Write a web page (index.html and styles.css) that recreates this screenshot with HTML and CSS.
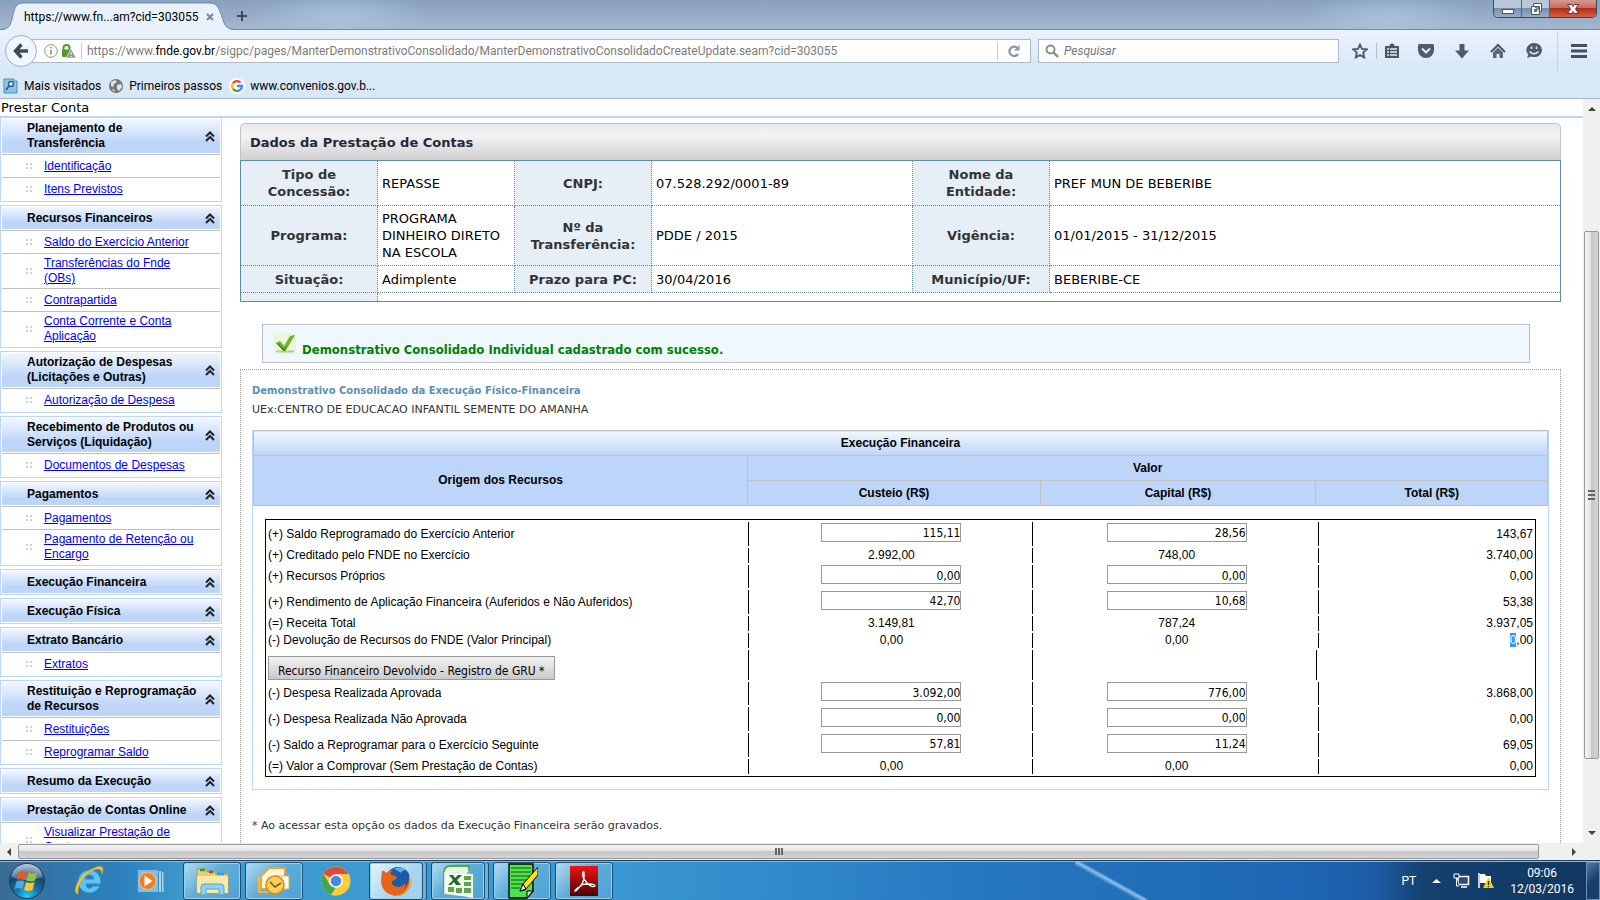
FILE: index.html
```html
<!DOCTYPE html>
<html lang="pt-BR">
<head>
<meta charset="utf-8">
<title>Prestar Conta</title>
<link rel="stylesheet" href="styles.css">
</head>
<body>
<header class="browser">
  <div class="tabstrip">
    <div class="tab">
      <svg class="tab-shape" viewBox="0 0 240 28" preserveAspectRatio="none" aria-hidden="true"><path d="M0 28 C12 28 11 20 14 10 C16 3 18 1 25 1 L211 1 C219 1 221 3 224 10 C228 20 227 28 240 28 Z" fill="#e9f2fb"/><path d="M0 27.500 C12 27.500 11 20 14 10 C16 3 18 1 25 1 L211 1 C219 1 221 3 224 10 C228 20 227 27.500 240 27.500" fill="none" stroke="#7089a6"/></svg>
      <span class="tab-title">https://www.fn...am?cid=303055</span>
      <button class="tab-close" aria-label="Fechar aba"><svg width="8" height="8" viewBox="0 0 8 8"><path d="M1 1l6 6M7 1l-6 6" stroke="#7d8b9a" stroke-width="2.200"/></svg></button>
    </div>
    <button class="tab-new" aria-label="Nova aba"><svg width="12" height="12" viewBox="0 0 12 12"><path d="M6 1v10M1 6h10" stroke="#3c4c5c" stroke-width="2"/></svg></button>
    <div class="window-buttons">
      <button aria-label="Minimizar"><svg width="14" height="14" viewBox="0 0 14 14"><rect x="1.500" y="7.500" width="11" height="4" fill="#fff" stroke="#47566a"/></svg></button>
      <button aria-label="Restaurar"><svg width="14" height="14" viewBox="0 0 14 14"><path d="M4.500 1.500h8v8h-2v3h-8v-8h2z" fill="#fff" stroke="#47566a"/><path d="M4.500 4.500h6v5M5.500 7.500h2v2h-2z" fill="#7189a5" stroke="#47566a"/></svg></button>
      <button class="close" aria-label="Fechar"><svg width="14" height="14" viewBox="0 0 14 14"><path d="M1.500 2.500h4L7 4.500l1.500-2h4L9.500 7l3 4.500h-4L7 9.500l-1.500 2h-4l3-4.500z" fill="#fff" stroke="#5b3740"/></svg></button>
    </div>
  </div>
  <nav class="navbar" aria-label="Navegação">
    <button class="back" aria-label="Voltar"><svg width="16" height="16" viewBox="0 0 16 16"><path d="M8.500 1.500L2.500 8l6 6.500M3 8h12" fill="none" stroke="#3e4b59" stroke-width="3.400"/></svg></button>
    <div class="urlbar">
      <svg width="14" height="14" viewBox="0 0 14 14"><circle cx="7" cy="7" r="6.300" fill="none" stroke="#909090"/><path d="M7 6v4.500M7 3v1.600" stroke="#8a8a8a" stroke-width="1.600"/></svg>
      <svg width="15" height="15" viewBox="0 0 15 15"><path d="M2.500 6V4a3 3 0 016 0v2" fill="none" stroke="#4c9b27" stroke-width="2"/><rect x="1" y="5.500" width="8" height="7.500" rx="1" fill="#4c9b27"/><path d="M10 4.500L15 14H5z" fill="#8f9494" stroke="#fff" stroke-width=".6"/><path d="M10 8v3M10 12v1" stroke="#fff"/></svg>
      <div class="url" role="textbox" aria-label="Endereço">https://www.<b>fnde.gov.br</b>/sigpc/pages/ManterDemonstrativoConsolidado/ManterDemonstrativoConsolidadoCreateUpdate.seam?cid=303055</div>
      <button class="reload" aria-label="Recarregar"><svg width="14" height="14" viewBox="0 0 14 14"><path d="M11 10A4.700 4.700 0 1110 3.600" fill="none" stroke="#8797a8" stroke-width="2.200"/><path d="M12.500 1v5.500H7z" fill="#8797a8"/></svg></button>
    </div>
    <label class="search"><svg width="14" height="14" viewBox="0 0 14 14"><circle cx="5.500" cy="5.500" r="4" fill="none" stroke="#8d8d8d" stroke-width="2"/><path d="M8.500 8.500l4.500 4.500" stroke="#8d8d8d" stroke-width="2.400"/></svg><input type="text" placeholder="Pesquisar" aria-label="Pesquisar"></label>
    <div class="tools">
      <button aria-label="Favoritar"><svg viewBox="0 0 16 16"><path d="M8 1.500l2 4.400 4.800.5-3.600 3.200 1 4.800L8 12l-4.200 2.400 1-4.800L1.200 6.400 6 5.900z" fill="none" stroke="#4a5763" stroke-width="1.800"/></svg></button>
      <button class="divided" aria-label="Favoritos"><svg viewBox="0 0 16 16"><path d="M1 3h4.500a2.500 2.500 0 015 0H15v12H1z" fill="#4a5763"/><path d="M3 6h2M6 6h7M3 9h2M6 9h7M3 12h2M6 12h7" stroke="#e4eef8" stroke-width="1.400"/></svg></button>
      <button aria-label="Pocket"><svg viewBox="0 0 16 16"><path d="M0 2.500Q0 1 1.500 1h13Q16 1 16 2.500V7a8 8 0 01-16 0z" fill="#4f5b68"/><path d="M4 5.500l4 4 4-4" fill="none" stroke="#e4eef8" stroke-width="2"/></svg></button>
      <button aria-label="Downloads"><svg viewBox="0 0 16 16"><path d="M5.500 1h5v6.500H15l-7 8-7-8h4.500z" fill="#4f5b68"/></svg></button>
      <button aria-label="Início"><svg viewBox="0 0 16 16"><path d="M1 9l7-7 7 7" fill="none" stroke="#4a5763" stroke-width="2"/><path d="M3 9.500l5-5 5 5V15H9.500v-4h-3v4H3z" fill="#5c6874"/></svg></button>
      <button aria-label="Hello"><svg viewBox="0 0 16 16"><path d="M8 0a8 7 0 018 7 8 7 0 01-11 6.600L1 15l1.300-3.500A8 7 0 018 0z" fill="#4f5b68"/><path d="M5.500 3.500v2.500M10.500 3.500v2.500M3.500 8.500q4.500 4.500 9 0" fill="none" stroke="#e4eef8" stroke-width="1.500"/></svg></button>
      <button class="menu" aria-label="Menu"><svg viewBox="0 0 16 16"><path d="M0 2.500h16M0 8h16M0 13.500h16" stroke="#44505c" stroke-width="2.800"/></svg></button>
    </div>
  </nav>
  <nav class="bookmarks" aria-label="Favoritos">
    <a href="#"><svg width="16" height="16" viewBox="0 0 16 16"><path d="M1 1h10v2h3v12H1z" fill="#8ec4e6" stroke="#4a8fbd"/><circle cx="8" cy="6" r="2.500" fill="#d8effc" stroke="#28638c" stroke-width="1.400"/><path d="M6 8l-3 4" stroke="#28638c" stroke-width="1.800"/></svg>Mais visitados</a>
    <a href="#"><svg width="16" height="16" viewBox="0 0 16 16"><circle cx="8" cy="8" r="7" fill="#777"/><path d="M3 4l4-2 2 2-3 2-1 3-2-1zM9 7l4-1 1 3-3 4-2-2zM4 11l3 1-1 2z" fill="#e2e6ea"/></svg>Primeiros passos</a>
    <a href="#"><svg width="16" height="16" viewBox="0 0 16 16"><circle cx="8" cy="8" r="8" fill="#fff"/><g fill="none" stroke-width="2.300"><path d="M4 5.200A5 5 0 0111.500 4.500" stroke="#ea4335"/><path d="M4 5.200a5 5 0 000 5.600" stroke="#fbbc05"/><path d="M4 10.800A5 5 0 0011 12" stroke="#34a853"/><path d="M11 12A5 5 0 0013 8H8" stroke="#4285f4"/></g></svg>www.convenios.gov.b...</a>
  </nav>
</header>

<div class="viewport">
  <div class="page">
    <div class="crumb">Prestar Conta</div>
    <div class="columns">
      <nav class="sidebar" aria-label="Menu principal">
        <section><h2>Planejamento de Transferência</h2><ul><li><a href="#">Identificação</a></li><li><a href="#">Itens Previstos</a></li></ul></section>
        <section><h2>Recursos Financeiros</h2><ul><li><a href="#">Saldo do Exercício Anterior</a></li><li><a href="#">Transferências do Fnde (OBs)</a></li><li><a href="#">Contrapartida</a></li><li><a href="#">Conta Corrente e Conta Aplicação</a></li></ul></section>
        <section><h2>Autorização de Despesas (Licitações e Outras)</h2><ul><li><a href="#">Autorização de Despesa</a></li></ul></section>
        <section><h2>Recebimento de Produtos ou Serviços (Liquidação)</h2><ul><li><a href="#">Documentos de Despesas</a></li></ul></section>
        <section><h2>Pagamentos</h2><ul><li><a href="#">Pagamentos</a></li><li><a href="#">Pagamento de Retenção ou Encargo</a></li></ul></section>
        <section><h2>Execução Financeira</h2></section>
        <section><h2>Execução Física</h2></section>
        <section><h2>Extrato Bancário</h2><ul><li><a href="#">Extratos</a></li></ul></section>
        <section><h2>Restituição e Reprogramação de Recursos</h2><ul><li><a href="#">Restituições</a></li><li><a href="#">Reprogramar Saldo</a></li></ul></section>
        <section><h2>Resumo da Execução</h2></section>
        <section><h2>Prestação de Contas Online</h2><ul><li><a href="#">Visualizar Prestação de Contas</a></li></ul></section>
      </nav>
      <main class="content">
        <h1 class="panel-title">Dados da Prestação de Contas</h1>
        <table class="info">
          <colgroup><col class="k"><col class="k"><col class="k"><col class="v"><col class="k"><col></colgroup>
          <tr><th>Tipo de Concessão:</th><td>REPASSE</td><th>CNPJ:</th><td>07.528.292/0001-89</td><th>Nome da Entidade:</th><td>PREF MUN DE BEBERIBE</td></tr>
          <tr><th>Programa:</th><td>PROGRAMA DINHEIRO DIRETO NA ESCOLA</td><th>Nº da Transferência:</th><td>PDDE / 2015</td><th>Vigência:</th><td>01/01/2015 - 31/12/2015</td></tr>
          <tr><th>Situação:</th><td>Adimplente</td><th>Prazo para PC:</th><td>30/04/2016</td><th>Município/UF:</th><td>BEBERIBE-CE</td></tr>
          <tr class="blank"><th></th><td colspan="5"></td></tr>
        </table>
        <p class="message"><svg width="22" height="22" viewBox="0 0 22 22" aria-hidden="true"><rect width="22" height="22" fill="#edf6dc"/><path d="M2 18.500h18" stroke="#b9c3b0" stroke-width="2"/><path d="M2 10l4-2 4 5L16 3l5-1-9.500 16H9.500z" fill="#6cb52d"/><path d="M9.500 18L2 10l3 1 5 5 2-3-1 5z" fill="#3f8a1c"/></svg><strong>Demonstrativo Consolidado Individual cadastrado com sucesso.</strong></p>
        <div class="box">
          <h2>Demonstrativo Consolidado da Execução Físico-Financeira</h2>
          <p class="unit">UEx:CENTRO DE EDUCACAO INFANTIL SEMENTE DO AMANHA</p>
          <div class="grid">
            <table class="head">
              <colgroup><col class="h1"><col class="h2"><col class="h3"><col></colgroup>
              <tr><th class="caption" colspan="4">Execução Financeira</th></tr>
              <tr><th rowspan="2">Origem dos Recursos</th><th colspan="3">Valor</th></tr>
              <tr><th>Custeio (R$)</th><th>Capital (R$)</th><th>Total (R$)</th></tr>
            </table>
            <table class="data">
              <colgroup><col class="d1"><col class="d2"><col class="d3"><col></colgroup>
              <tr class="tall"><td>(+) Saldo Reprogramado do Exercício Anterior</td><td><input value="115,11" aria-label="Saldo anterior, custeio"></td><td><input value="28,56" aria-label="Saldo anterior, capital"></td><td>143,67</td></tr>
              <tr><td>(+) Creditado pelo FNDE no Exercício</td><td>2.992,00</td><td>748,00</td><td>3.740,00</td></tr>
              <tr class="mid"><td>(+) Recursos Próprios</td><td><input value="0,00" aria-label="Recursos próprios, custeio"></td><td><input value="0,00" aria-label="Recursos próprios, capital"></td><td>0,00</td></tr>
              <tr class="tall"><td>(+) Rendimento de Aplicação Financeira (Auferidos e Não Auferidos)</td><td><input value="42,70" aria-label="Rendimento, custeio"></td><td><input value="10,68" aria-label="Rendimento, capital"></td><td>53,38</td></tr>
              <tr><td>(=) Receita Total</td><td>3.149,81</td><td>787,24</td><td>3.937,05</td></tr>
              <tr><td>(-) Devolução de Recursos do FNDE (Valor Principal)</td><td>0,00</td><td>0,00</td><td><mark>0</mark>,00</td></tr>
              <tr class="action"><td><button>Recurso Financeiro Devolvido - Registro de GRU *</button></td><td></td><td class="inset"><span></span></td><td></td></tr>
              <tr class="mid"><td>(-) Despesa Realizada Aprovada</td><td><input value="3.092,00" aria-label="Despesa aprovada, custeio"></td><td><input value="776,00" aria-label="Despesa aprovada, capital"></td><td>3.868,00</td></tr>
              <tr class="tall"><td>(-) Despesa Realizada Não Aprovada</td><td><input value="0,00" aria-label="Despesa não aprovada, custeio"></td><td><input value="0,00" aria-label="Despesa não aprovada, capital"></td><td>0,00</td></tr>
              <tr class="tall"><td>(-) Saldo a Reprogramar para o Exercício Seguinte</td><td><input value="57,81" aria-label="Saldo a reprogramar, custeio"></td><td><input value="11,24" aria-label="Saldo a reprogramar, capital"></td><td>69,05</td></tr>
              <tr><td>(=) Valor a Comprovar (Sem Prestação de Contas)</td><td>0,00</td><td>0,00</td><td>0,00</td></tr>
            </table>
          </div>
          <p class="note">* Ao acessar esta opção os dados da Execução Financeira serão gravados.</p>
        </div>
      </main>
    </div>
  </div>
  <div class="vscroll" aria-hidden="true"><svg width="8" height="5" viewBox="0 0 8 5"><path d="M0 5l4-4 4 4z" fill="#444"/></svg><div class="thumb"><i></i><i></i><i></i></div><svg width="8" height="5" viewBox="0 0 8 5"><path d="M0 0l4 4 4-4z" fill="#444"/></svg></div>
</div>
<div class="hscroll" aria-hidden="true"><svg width="5" height="8" viewBox="0 0 5 8"><path d="M5 0L1 4l4 4z" fill="#444"/></svg><div class="thumb"><i></i><i></i><i></i></div><svg width="5" height="8" viewBox="0 0 5 8"><path d="M0 0l4 4-4 4z" fill="#444"/></svg></div>

<footer class="taskbar">
  <button class="start" aria-label="Iniciar"><svg width="38" height="38" viewBox="0 0 38 38"><defs><radialGradient id="orb" cx=".5" cy=".95" r=".95"><stop offset="0" stop-color="#1fd0ff"/><stop offset=".4" stop-color="#176c9f"/><stop offset=".7" stop-color="#1c4468"/><stop offset="1" stop-color="#a9bccb"/></radialGradient></defs><circle cx="19" cy="19" r="17.500" fill="url(#orb)" stroke="#17405e"/><path d="M4 15a15 13 0 0130 0q-15 6-30 0z" fill="#fff" opacity=".3"/><path d="M11 10q4-2 8 0l-2 8q-4-2-8 0z" fill="#e8562a"/><path d="M20.500 10.500q4 2 8.500 0l-2 8q-4 2-8.500 0z" fill="#8dc63f"/><path d="M8.500 19.500q4-2 8 0l-2 7.500q-4-2-8 0z" fill="#4aa8e8"/><path d="M18 20q4 2 8.500 0l-2 8q-4 2-8.500 0z" fill="#ffc52e"/></svg></button>
  <button class="app" aria-label="Internet Explorer"><svg width="32" height="32" viewBox="0 0 32 32"><path d="M16 5a11.500 11.500 0 1011 16h-7q-3 4-6 1-1-1-1-3h15q0-14-12-14zm-4 9q1-4 4.500-4t4.500 4z" fill="#5cc3f2" stroke="#2a8fcf"/><path d="M5 29q-5-1-1-10Q8 10 17 5q9-5 12-3 2 2 0 7 0-5-4-5-6 0-13 7-8 9-7 17z" fill="#fbcb2c" stroke="#d9a31a" stroke-width=".6"/></svg></button>
  <button class="app" aria-label="Media Player"><svg width="32" height="32" viewBox="0 0 32 32"><path d="M4 5h20v22H4z" fill="#7fbce6"/><path d="M25 6h2v21h-2zM28 7h1.500v20H28z" fill="#a8d5ef"/><circle cx="13.500" cy="16" r="8.500" fill="#f47c20" stroke="#ffc38d"/><path d="M10.500 10.500l8 5.500-8 5.500z" fill="#fff"/></svg></button>
  <button class="app open" aria-label="Explorador"><svg width="34" height="32" viewBox="0 0 34 32"><path d="M2 4h9l1 3h8l1 2h12v19H2z" fill="#e8cf72" stroke="#b99a3e"/><path d="M5 5h5" stroke="#2e9e3c" stroke-width="2.500"/><path d="M14 7h4" stroke="#d23b2a" stroke-width="2.500"/><path d="M22 9h7" stroke="#3d9ad8" stroke-width="2.500"/><path d="M2 11h31v17H2z" fill="#f8e9a6"/><path d="M6 30V22q0-3 3-3h16q4 0 4 3v8h-5v-6H11v6z" fill="#8fd0ee" stroke="#56a3cb"/></svg></button>
  <button class="app open" aria-label="Outlook"><svg width="34" height="32" viewBox="0 0 34 32"><path d="M4 11l8-8h16v21H4z" fill="#fff6dc" stroke="#f0a52a" stroke-width="2"/><path d="M2 12v15h16" fill="none" stroke="#f5b643" stroke-width="2"/><path d="M18 11h14v13H18z" fill="#fff" stroke="#e8a93a"/><circle cx="18" cy="20" r="9" fill="#fbcf58" stroke="#d28d1b" stroke-width="1.600"/><path d="M13 17l5 5 6-4" fill="none" stroke="#7a5a2a" stroke-width="1.600"/></svg></button>
  <button class="app" aria-label="Chrome"><svg width="32" height="32" viewBox="0 0 32 32"><circle cx="16" cy="16" r="14.500" fill="#f9cd3c"/><path d="M16 16L3.500 8.700A14.500 14.500 0 0128.500 9H16z" fill="#df4a3c"/><path d="M3.500 8.700L10 20l6 3-5 6.600A14.500 14.500 0 013.500 8.700z" fill="#3fa652"/><path d="M16 22.500l-4 7.500q2 .5 4.500.5L22.500 19z" fill="#f9cd3c"/><circle cx="16" cy="16" r="6.800" fill="#fff"/><circle cx="16" cy="16" r="5.300" fill="#4a86e8"/></svg></button>
  <button class="app open active stacked" aria-label="Firefox"><svg width="32" height="32" viewBox="0 0 32 32"><circle cx="18" cy="14" r="12" fill="#1e5aa8"/><path d="M14 4q6-3 12 1-4 0-5 3-4-3-7-4z" fill="#58b4ea"/><path d="M2 6q2-1 4 2 3-3 7-3-3 2-2 5 4 0 6 2-1 3-5 4-1 5 5 6 6 0 8-4 1 3-2 6 7-4 6-14 4 8 0 14-6 8-14 7Q3 29 1 18 1 12 2 6z" fill="#e8641b"/><path d="M29 9q4 9-1 16-7 7-14 6 12-1 15-11 1-6 0-11z" fill="#fbc02d"/></svg></button>
  <button class="app open stacked" aria-label="Excel"><svg width="32" height="34" viewBox="0 0 32 34"><path d="M2 30V8q0-6 7-6h18v5" fill="#e8f5e0" stroke="#58a83a" stroke-width="1.800"/><path d="M2 30V8h16v24z" fill="#d5e8cd"/><path d="M3 8l28 2v24l-28-5z" fill="#f4faf0"/><path d="M22 12h7v4h-7zM22 18h7v4h-7zM22 24h7v5h-7zM6 23h6v5H6zM14 24h6v5h-6z" fill="#5fa44e"/><path d="M7 11h4l2 3 3-3h4l-5 5 4 5h-5l-2-3-3 3H6l5-5z" fill="#24662c"/></svg></button>
  <button class="app open" aria-label="Editor de texto"><svg width="32" height="36" viewBox="0 0 32 36"><path d="M3 1h24v27l-6 7H3z" fill="#4fe04f" stroke="#000" stroke-width="1.400"/><path d="M5 5h20M5 9h20M5 13h20M5 17h18M5 21h13M5 25h9" stroke="#0c5c0c" stroke-width="1.200"/><path d="M27 28h-6v7z" fill="#ddd" stroke="#000"/><path d="M14 28l3-7L32 4v8L19 27z" fill="#ffe21a" stroke="#000"/><path d="M14 28l3-7 3 5z" fill="#fff" stroke="#000"/></svg></button>
  <button class="app open" aria-label="Adobe Reader"><svg width="28" height="30" viewBox="0 0 28 30"><defs><linearGradient id="pdf" x1="0" y1="0" x2="0" y2="1"><stop offset="0" stop-color="#f01414"/><stop offset="1" stop-color="#4a0303"/></linearGradient></defs><rect width="28" height="30" fill="url(#pdf)"/><path d="M5 25q1-3 6-5 4-7 3-13 0-2-1-1-2 4 4 11 5 5 8 3 0-2-6-2-5 0-8 1-4 6-6 6z" fill="none" stroke="#fff" stroke-width="1.300"/></svg></button>
  <div class="tray">
    <span class="lang">PT</span>
    <svg width="9" height="6" viewBox="0 0 9 6"><path d="M0 5l4.500-4L9 5z" fill="#fff"/></svg>
    <svg width="17" height="17" viewBox="0 0 17 17"><path d="M5 4.500h10.500v8H5zM8 15h6" fill="#24507f" stroke="#fff" stroke-width="1.500"/><path d="M1 2h5v4H1zM3.500 6v8H6" fill="#16395f" stroke="#fff"/></svg>
    <svg width="17" height="17" viewBox="0 0 17 17"><path d="M2 1v15" stroke="#fff" stroke-width="1.500"/><path d="M3 2h5l1 2h5v7H3z" fill="#fff"/><path d="M11.500 5L17 16H6z" fill="#f4cf1e"/><path d="M11.500 9v4M11.500 14v1.200" stroke="#332b00" stroke-width="1.300"/></svg>
    <time class="clock">09:06<br>12/03/2016</time>
    <button class="desktop" aria-label="Mostrar área de trabalho"></button>
  </div>
</footer>
</body>
</html>
```
FILE: styles.css
```css
* { box-sizing: border-box; }
body {
  margin: 0;
  height: 100vh;
  display: flex;
  flex-direction: column;
  overflow: hidden;
  font: 13px/17px "DejaVu Sans", sans-serif;
  color: #000;
  background: #fff;
}
button { padding: 0; border: 0; background: none; font: inherit; color: inherit; }
svg { display: block; flex: none; }
table { border-collapse: collapse; }

/* Browser chrome */
.browser {
  flex: none;
  height: 99px;
  border-bottom: 1px solid #a3b7d2;
  background: linear-gradient(#e9f2fb 30px, #d9e8f7 68px);
  font: 12px/16px Roboto, "Open Sans", sans-serif;
}
.tabstrip {
  display: flex;
  height: 30px;
  border-bottom: 1px solid #7089a6;
  background: radial-gradient(ellipse 90px 30px at 340px 20px, #a9c2da, transparent), radial-gradient(ellipse 90px 30px at 1390px 22px, #a9c2da, transparent), linear-gradient(#86a2bf, #98abc5 50%, #a3b8d2);
}
.tab { position: relative; display: flex; align-items: center; gap: 8px; width: 236px; height: 30px; padding: 3px 22px 0 24px; }
.tab-shape { position: absolute; left: 0; top: 2px; width: 100%; height: 28px; }
.tab-title { position: relative; flex: 1; white-space: nowrap; }
.tab-close { position: relative; }
.tab-new { padding-top: 2px; }
.window-buttons { display: flex; height: 18px; margin: 0 3px 0 auto; border: 1px solid #384a60; border-top: 0; border-radius: 0 0 5px 5px; overflow: hidden; }
.window-buttons button { display: flex; justify-content: center; align-items: center; width: 28px; border-right: 1px solid #50647c; background: linear-gradient(#b7c6d8 50%, #748eac 50%, #96aeca); }
.window-buttons .close { width: 46px; border-right: 0; background: linear-gradient(#d7998f, #c4685a 50%, #b32d16 50%, #d56045); }
.navbar { display: flex; align-items: center; height: 42px; padding-left: 5px; }
.back { position: relative; display: flex; justify-content: center; align-items: center; width: 32px; height: 32px; border: 1px solid #a0b0c3; border-radius: 50%; background: #eff6fd; }
.urlbar { flex: 1; display: flex; align-items: center; gap: 3px; height: 24px; margin: 0 7px 0 -6px; padding-left: 12px; border: 1px solid #a9bacb; background: #fff; }
.url { flex: 1; margin-left: 2px; padding-left: 5px; border-left: 1px solid #ccc; color: #7b7b7b; white-space: nowrap; overflow: hidden; }
.url b { font-weight: 400; color: #000; }
.reload { display: flex; justify-content: center; align-items: center; width: 33px; height: 18px; border-left: 1px solid #ccc; }
.search { display: flex; align-items: center; gap: 5px; width: 301px; height: 24px; padding-left: 6px; border: 1px solid #a9bacb; background: #fff; }
.search input { flex: 1; min-width: 0; padding: 0; border: 0; background: none; font: inherit; outline: 0; }
.search input::placeholder { font-style: italic; color: #757575; }
.tools { display: flex; align-items: center; padding-left: 5px; }
.tools button { display: flex; justify-content: center; align-items: center; width: 36px; height: 16px; }
.tools svg { width: 16px; height: 16px; }
.tools button.divided { width: 30px; margin-right: 2px; border-left: 1px solid #b5c1ce; }
.tools button:nth-child(1) { width: 32px; }
.tools button.menu { width: 43px; height: 40px; margin-left: 5px; border-left: 1px solid #c5d3e1; }
.bookmarks { display: flex; gap: 7px; align-items: center; height: 27px; padding-left: 3px; }
.bookmarks a { display: flex; align-items: center; gap: 5px; color: #000; text-decoration: none; }

/* Page viewport */
.viewport { flex: 1; display: flex; min-height: 0; }
.page { flex: 1; min-width: 0; overflow: hidden; }
.crumb { height: 19px; padding: 1px 0 0 1px; border-bottom: 2px solid #bdd5f8; line-height: 16px; }
.columns { display: flex; }
.sidebar { flex: none; width: 222px; margin-top: -1px; font: 12px/15px "Liberation Sans", Arial, sans-serif; }
.sidebar section { margin-bottom: 3px; padding: 1px; border: 1px solid #bdd5f8; }
.sidebar h2 {
  display: flex;
  align-items: center;
  min-height: 22px;
  margin: 0;
  padding: 2px 22px 2px 25px;
  background: url("data:image/svg+xml,%3Csvg xmlns='http://www.w3.org/2000/svg' width='10' height='11'%3E%3Cpath d='M1 5.500l4-4 4 4M1 10l4-4 4 4' fill='none' stroke='%23222' stroke-width='2'/%3E%3C/svg%3E") right 5px center no-repeat, linear-gradient(#f2f7fe, #bdd5f8 70%);
  font: inherit;
  font-weight: 700;
}
.sidebar ul { margin: 1px 0 0; padding: 0; list-style: none; }
.sidebar li {
  display: flex;
  align-items: center;
  min-height: 23px;
  padding: 2px 20px 2px 42px;
  border-top: 1px solid #c0c0c0;
  background: url("data:image/svg+xml,%3Csvg xmlns='http://www.w3.org/2000/svg' width='6' height='6'%3E%3Cpath d='M0 0h2v2H0zM4 0h2v2H4zM0 4h2v2H0zM4 4h2v2H4z' fill='%23bdd5f8'/%3E%3C/svg%3E") 24px center no-repeat;
}
.sidebar a { color: #00e; }
.content { flex: 1; min-width: 0; padding: 5px 22px 0 18px; }
.panel-title {
  height: 37px;
  margin: 0;
  padding: 0 9px;
  border: 1px solid #c4c4c4;
  border-bottom: 0;
  border-radius: 5px 5px 0 0;
  background: linear-gradient(#e8e8e8, #f4f4f4 30%, #d0d0d0);
  font: bold 13px/37px "DejaVu Sans", sans-serif;
  color: #1d2a3c;
}
.info { width: 100%; table-layout: fixed; border: 1px solid #5f8ca8; }
.info .k { width: 137px; }
.info .v { width: 261px; }
.info th, .info td { height: 27px; padding: 4px 3px 4px 4px; border: 1px dotted #5f8ca8; }
.info tr:first-child > * { height: 45px; }
.info th { padding: 4px 16px; background: #e6eff5; color: #333; }
.info th:nth-child(n+3) { padding: 4px 8px; }
.info th:nth-child(5) { padding: 4px 16px; }
.info .blank th, .info .blank td { height: 9px; padding: 0; }
.message { display: flex; gap: 6px; height: 39px; margin: 22px 31px 6px 22px; padding: 8px 11px; border: 1px solid #c0c0c0; background: #f0f8ff; color: #008000; }
.message strong { padding-top: 8px; font-family: "DejaVu Sans Condensed", sans-serif; }
.box { padding: 13px 11px; min-height: 600px; border: 1px dotted #999; }
.box h2 { margin: 0; font: bold 10px/16px "DejaVu Sans", sans-serif; color: #5b8fb5; }
.unit { margin: 3px 0 12px; font-size: 11px; line-height: 16px; color: #333; }
.note { margin: 28px 0 0; font-size: 11px; line-height: 16px; color: #333; }
.grid { border: 1px solid #bdd5f8; border-top: 0; font: 12px/15px "Liberation Sans", Arial, sans-serif; }
.head { width: 100%; table-layout: fixed; background: #bdd5f8; }
.h1 { width: 38.2%; } .h2 { width: 22.6%; } .h3 { width: 21.3%; }
.head th { height: 25px; padding: 0; border: 1px solid #c0c0c0; }
.head .caption { background: linear-gradient(#f2f7fe, #bdd5f8); }
.data { width: calc(100% - 24px); margin: 13px 12px 12px; table-layout: fixed; border: 1px solid #000; border-collapse: separate; border-spacing: 2px; }
.d1 { width: 38.2%; } .d2 { width: 22.4%; } .d3 { width: 22.6%; }
.data td { height: 15px; padding: 0 1px; border-right: 1px solid #000; text-align: center; white-space: nowrap; }
.data td:first-child { padding: 0; text-align: left; }
.data td:last-child { padding: 0; border-right: 0; text-align: right; }
.data .mid td { height: 23px; }
.data .tall td { height: 24px; }
.data .action td { height: 30px; vertical-align: bottom; }
.data td.inset { padding: 0; border: 0; }
.inset span { display: block; height: 30px; margin-right: 2px; border-right: 1px solid #000; }
.data input { display: block; width: 140px; height: 19px; margin: 0 auto 4px; padding: 2px 0 0; border: 1px solid #999; font: 12px/16px "DejaVu Sans Condensed", sans-serif; text-align: right; }
.data button { display: block; height: 24px; padding: 5px 9px 0; border: 1px solid #999; background: linear-gradient(#f2f2f2, #cacaca); font: 12px/18px "DejaVu Sans Condensed", sans-serif; }
mark { background: #39f; color: #fff; }

/* Scroll bars */
.vscroll { flex: none; display: flex; flex-direction: column; align-items: center; justify-content: space-between; width: 17px; padding: 7px 1px; background: #f0f0f0; }
.vscroll .thumb { display: flex; flex-direction: column; align-items: center; justify-content: center; gap: 2px; width: 15px; height: 528px; margin-top: 48px; border: 1px solid #989898; border-radius: 2px; background: linear-gradient(90deg, #f5f5f5, #e4e4e6 45%, #c6c6ca 50%, #d4d4d6); }
.vscroll i { width: 7px; height: 2px; background: #666; }
.hscroll { flex: none; display: flex; align-items: center; justify-content: space-between; height: 17px; padding: 0 23px 0 6px; background: #f0f0f0; }
.hscroll .thumb { display: flex; align-items: center; justify-content: center; gap: 1px; flex: 1; height: 15px; margin: 0 33px 0 7px; border: 1px solid #989898; border-radius: 2px; background: linear-gradient(#f5f5f5, #e4e4e6 45%, #c6c6ca 50%, #d4d4d6); }
.hscroll i { width: 2px; height: 7px; background: #666; }

/* Taskbar */
.taskbar {
  flex: none;
  display: flex;
  align-items: center;
  height: 40px;
  padding-left: 8px;
  border-top: 1px solid #1b3f5e;
  box-shadow: inset 0 1px #8ab8dc;
  background: linear-gradient(to top right, transparent 44%, #8fc0ec 50%, transparent 54%) 1075px 0 / 72px 40px no-repeat, linear-gradient(90deg, #3a6c94, #2c7fba 7%, #3e9bcf 12%, #3a98d2 38%, #2577bf 62%, #1d65b2 82%, #1d5ca5 86%, #14406f 89%, #103760);
}
.start { width: 38px; margin-right: 20px; }
.app { display: flex; align-items: center; justify-content: center; width: 58px; height: 38px; margin-right: 4px; }
.app:nth-child(2) { width: 46px; margin-right: 15px; }
.app:nth-child(3) { width: 46px; margin-right: 10px; }
.open { border: 1px solid #1d4d72; border-radius: 3px; background: linear-gradient(135deg, #b4dcf0, #5eaedb 45%, #4ea2d4); box-shadow: inset 0 0 0 1px #9dd0ec; }
.active { background: linear-gradient(135deg, #e6f5fc, #a9d6ee 60%, #9fd0ec); }
.stacked { width: 54px; margin-right: 8px; box-shadow: inset 0 0 0 1px #9dd0ec, 3px 0 #6fb2da, 4px 0 #1d4d72; }
.tray { display: flex; align-items: center; gap: 12px; height: 100%; margin-left: auto; color: #fff; font: 12px/16px Roboto, "Open Sans", sans-serif; }
.lang { margin-right: 4px; }
.tray svg + svg + svg { margin-left: -5px; }
.clock { margin-left: 4px; text-align: center; }
.desktop { width: 14px; height: 38px; border: 1px solid #6f93b5; background: linear-gradient(135deg, #4f7ca6, #173f68 50%); }
```
